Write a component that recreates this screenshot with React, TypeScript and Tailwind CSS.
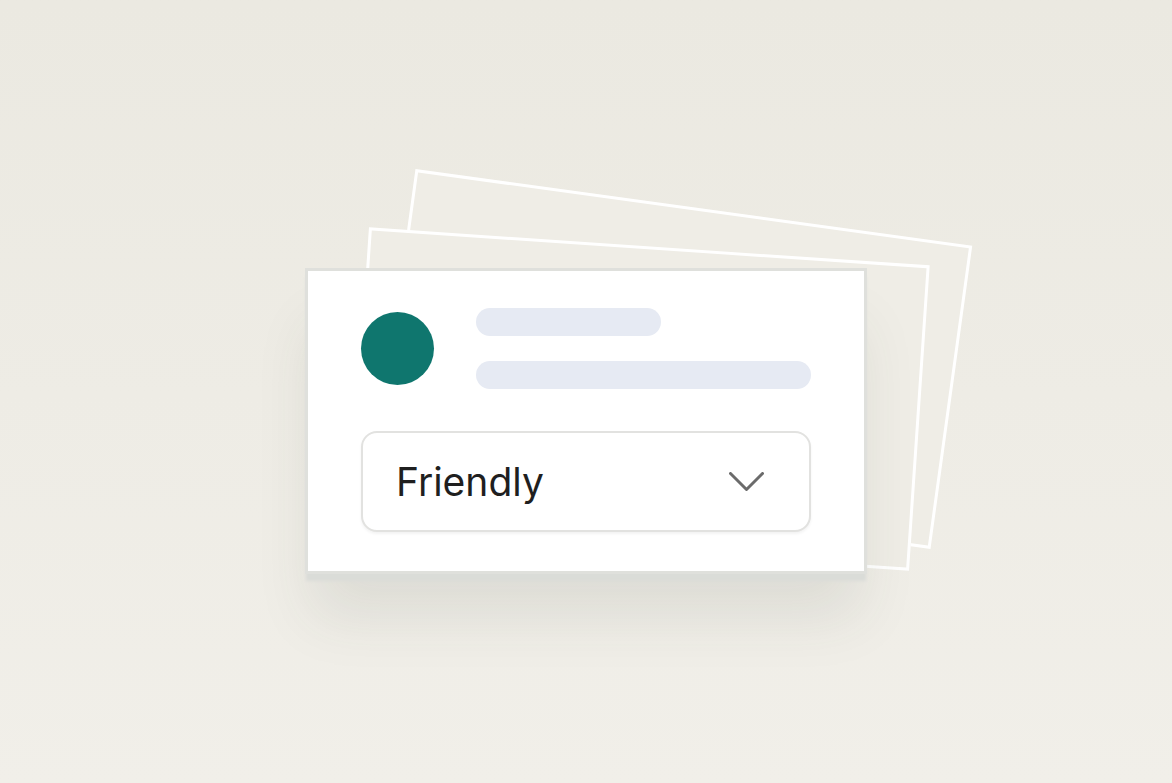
function BackCard({ className }: { className: string }) {
  return <div className={`absolute inset-0 border-[3px] border-white bg-[#efede6] ${className}`} />
}

export default function App() {
  return (
    <div className="flex h-[783px] w-full items-center justify-center bg-gradient-to-b from-[#ebe9e1] to-[#f1efe9] pt-[59px] font-['Inter','Liberation_Sans',sans-serif]">
      <div className="relative h-[306px] w-[562px]">
        <BackCard className="translate-x-[87px] -translate-y-[62px] rotate-[7.84deg]" />
        <BackCard className="translate-x-[53px] -translate-y-[22px] rotate-[3.88deg]" />

        <div className="relative flex h-full w-full flex-col border-[3px] border-[#dfe0dc] bg-white px-[53px] pt-[37px] pb-[39px] shadow-[0_8px_3px_-1px_#dadcd8,0_50px_55px_-8px_rgba(60,70,60,0.10)]">
          <div className="flex h-[80px] items-center gap-[42px]">
            <div className="h-[73px] w-[73px] shrink-0 rounded-full bg-[#0f766e]" />
            <div className="flex flex-1 flex-col gap-[25px]">
              <div className="h-[28px] w-[185px] rounded-full bg-[#e6eaf3]" />
              <div className="h-[28px] w-full rounded-full bg-[#e6eaf3]" />
            </div>
          </div>

          <div className="mt-[43px] flex h-[101px] items-center justify-between rounded-2xl border-2 border-[#e2e2e0] bg-white pl-[33px] pr-[45px] shadow-[0_2px_3px_rgba(0,0,0,0.05)]">
            <span className="text-[39px] leading-none text-[#1f1f1f]">Friendly</span>
            <svg width="35" height="19" viewBox="0 0 35 19" fill="none" stroke="#6b6b6b" strokeWidth="3" strokeLinecap="round" strokeLinejoin="round">
              <polyline points="1.5,1.5 17.5,17.5 33.5,1.5" />
            </svg>
          </div>
        </div>
      </div>
    </div>
  )
}
